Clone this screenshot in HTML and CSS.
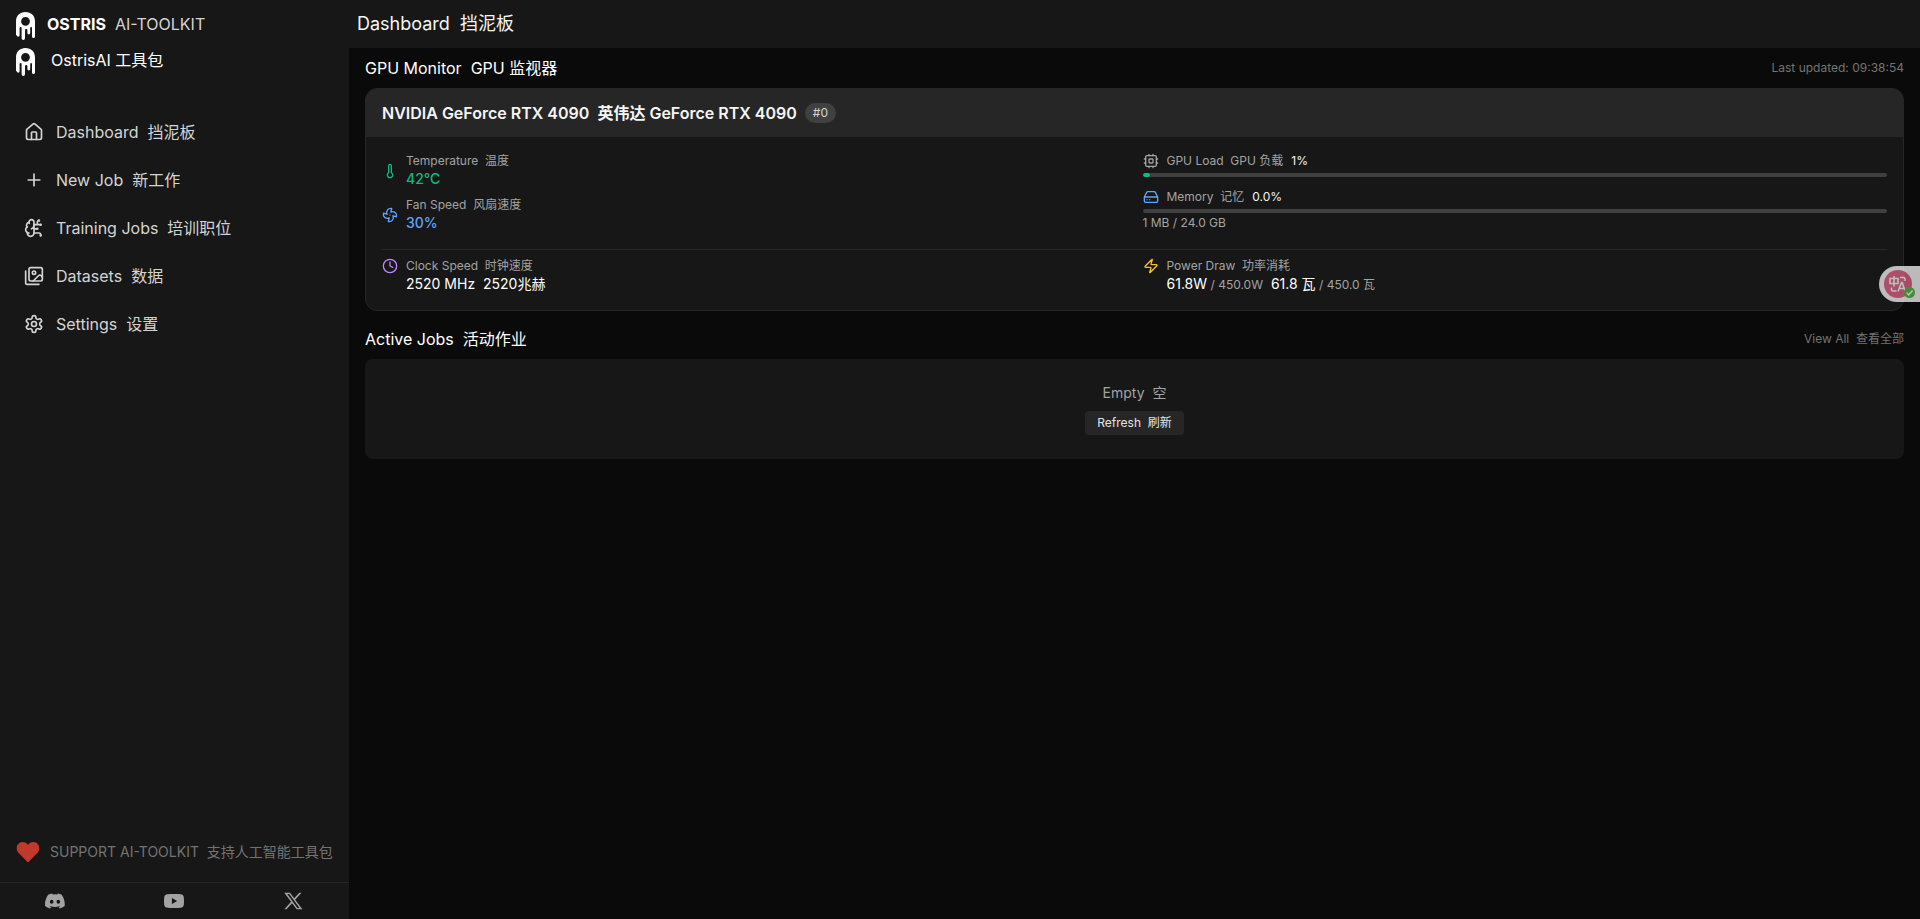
FILE: index.html
```html
<!DOCTYPE html>
<html lang="en">
<head>
<meta charset="utf-8">
<meta name="viewport" content="width=device-width, initial-scale=1">
<title>Ostris AI-Toolkit</title>
<link rel="stylesheet" href="styles.css">
</head>
<body>
<svg class="sprite" aria-hidden="true">
  <symbol id="logo" viewBox="0 0 19 28">
    <path fill="#fff" fill-rule="evenodd" d="M0 9.500C0 3.500 4 0 9.500 0S19 3.500 19 9.500V24.500a1.500 1.500 0 0 1-3 0V16a.9.9 0 0 0-1.800 0V21a1.400 1.400 0 0 1-2.800 0V18.200a1.200 1.200 0 0 0-2.400 0V26.300a1.700 1.700 0 0 1-3.400 0V16a1 1 0 0 0-2 0V23.300a1.400 1.400 0 0 1-2.800 0H0zM9.500 4.900a4.400 4.400 0 1 0 0 8.800a4.400 4.400 0 0 0 0-8.800z"/>
  </symbol>
</svg>
<div class="app">
  <aside class="sidebar">
    <div class="brand">
      <h1 class="brand-row"><svg class="logo"><use href="#logo"/></svg><span><b>OSTRIS</b>&nbsp; <span class="brand-sub">AI-TOOLKIT</span></span></h1>
      <div class="brand-row brand-row-alt"><svg class="logo"><use href="#logo"/></svg><span>OstrisAI 工具包</span></div>
    </div>
    <nav class="nav">
      <a href="#"><svg class="icon" viewBox="0 0 24 24"><path d="M15 21v-8a1 1 0 0 0-1-1h-4a1 1 0 0 0-1 1v8"/><path d="M3 10a2 2 0 0 1 .709-1.528l7-5.999a2 2 0 0 1 2.582 0l7 5.999A2 2 0 0 1 21 10v9a2 2 0 0 1-2 2H5a2 2 0 0 1-2-2z"/></svg>Dashboard&nbsp; 挡泥板</a>
      <a href="#"><svg class="icon" viewBox="0 0 24 24"><path d="M5 12h14M12 5v14"/></svg>New Job&nbsp; 新工作</a>
      <a href="#"><svg class="icon" viewBox="0 0 24 24"><path d="M12 5a3 3 0 1 0-5.997.125 4 4 0 0 0-2.526 5.770 4 4 0 0 0 .556 6.588A4 4 0 1 0 12 18Z"/><path d="M9 13a4.500 4.500 0 0 0 3-4M6.003 5.125A3 3 0 0 0 6.401 6.500M3.477 10.896a4 4 0 0 1 .585-.396M6 18a4 4 0 0 1-1.967-.516M12 13h4M12 18h6a2 2 0 0 1 2 2v1M12 8h8M16 8V5a2 2 0 0 1 2-2"/><circle cx="16" cy="13" r=".5"/><circle cx="18" cy="3" r=".5"/><circle cx="20" cy="21" r=".5"/><circle cx="20" cy="8" r=".5"/></svg>Training Jobs&nbsp; 培训职位</a>
      <a href="#"><svg class="icon" viewBox="0 0 24 24"><path d="M18 22H4a2 2 0 0 1-2-2V6"/><path d="m22 13-1.296-1.296a2.410 2.410 0 0 0-3.408 0L11 18"/><circle cx="12" cy="8" r="2"/><rect width="16" height="16" x="6" y="2" rx="2"/></svg>Datasets&nbsp; 数据</a>
      <a href="#"><svg class="icon" viewBox="0 0 24 24"><path d="M12.220 2h-.440a2 2 0 0 0-2 2v.180a2 2 0 0 1-1 1.730l-.430.250a2 2 0 0 1-2 0l-.150-.080a2 2 0 0 0-2.730.730l-.220.380a2 2 0 0 0 .730 2.730l.150.100a2 2 0 0 1 1 1.720v.510a2 2 0 0 1-1 1.740l-.150.090a2 2 0 0 0-.730 2.730l.220.380a2 2 0 0 0 2.730.730l.150-.080a2 2 0 0 1 2 0l.430.250a2 2 0 0 1 1 1.730V20a2 2 0 0 0 2 2h.440a2 2 0 0 0 2-2v-.180a2 2 0 0 1 1-1.730l.430-.250a2 2 0 0 1 2 0l.150.080a2 2 0 0 0 2.730-.730l.220-.390a2 2 0 0 0-.730-2.730l-.150-.080a2 2 0 0 1-1-1.740v-.500a2 2 0 0 1 1-1.740l.150-.090a2 2 0 0 0 .730-2.730l-.220-.380a2 2 0 0 0-2.730-.730l-.150.080a2 2 0 0 1-2 0l-.430-.250a2 2 0 0 1-1-1.730V4a2 2 0 0 0-2-2z"/><circle cx="12" cy="12" r="3"/></svg>Settings&nbsp; 设置</a>
    </nav>
    <a class="support" href="#"><svg class="heart" viewBox="0 0 24 24"><path fill="#c0392b" d="M12 22.400L2.600 12.900C-1.500 8.500 1.500 2 6.500 2 9 2 11 3.200 12 4.800 13 3.200 15 2 17.500 2 22.500 2 25.500 8.500 21.400 12.900z"/></svg><span>SUPPORT AI-TOOLKIT&nbsp; 支持人工智能工具包</span></a>
    <div class="social">
      <a href="#" aria-label="Discord"><svg viewBox="0 0 24 24"><path d="M20.317 4.370a19.800 19.800 0 0 0-4.885-1.515c-.210.375-.444.865-.608 1.250a18.300 18.300 0 0 0-5.487 0 12.600 12.600 0 0 0-.617-1.250A19.700 19.700 0 0 0 3.677 4.370C.533 9.046-.320 13.580.100 18.058a19.900 19.900 0 0 0 5.993 3.030c.462-.630.874-1.295 1.226-1.994a13 13 0 0 1-1.872-.892l.372-.292c3.928 1.793 8.180 1.793 12.062 0l.373.292a12.300 12.300 0 0 1-1.873.892c.360.698.772 1.362 1.225 1.993a19.800 19.800 0 0 0 6.002-3.030c.500-5.177-.838-9.674-3.549-13.660zM8.020 15.330c-1.183 0-2.157-1.085-2.157-2.419S6.818 10.500 8.020 10.500s2.176 1.090 2.157 2.410c0 1.335-.956 2.420-2.157 2.420zm7.975 0c-1.183 0-2.157-1.085-2.157-2.419s.955-2.411 2.157-2.411 2.176 1.090 2.157 2.410c0 1.335-.946 2.420-2.157 2.420z"/></svg></a>
      <a href="#" aria-label="YouTube"><svg viewBox="0 0 24 24"><path d="M23.500 6.200a3 3 0 0 0-2.100-2.100C19.500 3.500 12 3.500 12 3.500s-7.500 0-9.400.600A3 3 0 0 0 .500 6.200 31 31 0 0 0 0 12a31 31 0 0 0 .500 5.800 3 3 0 0 0 2.100 2.100c1.900.600 9.400.600 9.400.600s7.500 0 9.400-.600a3 3 0 0 0 2.100-2.100A31 31 0 0 0 24 12a31 31 0 0 0-.500-5.800zM9.500 15.600V8.400l6.300 3.600z"/></svg></a>
      <a href="#" aria-label="X"><svg viewBox="0 0 24 24"><path fill-rule="evenodd" d="M1.500 2h6.900l5 6.700L19.600 2h2.600l-7.600 8.400L23.300 22h-6.900l-5.500-7.300L4.200 22H1.600l8.100-9zM5.100 3.700 17.300 20.300h2.500L7.500 3.700z"/></svg></a>
    </div>
  </aside>
  <main class="main">
    <header class="topbar"><h2>Dashboard&nbsp; 挡泥板</h2></header>
    <div class="content">
      <section>
        <div class="section-head"><h3>GPU Monitor&nbsp; GPU 监视器</h3><span class="muted">Last updated: 09:38:54</span></div>
        <article class="gpu">
          <div class="gpu-head"><h4>NVIDIA GeForce RTX 4090&nbsp; 英伟达 GeForce RTX 4090</h4><span class="badge">#0</span></div>
          <div class="gpu-body">
            <div class="grid">
              <div class="stats">
                <div class="stat"><svg class="icon green" viewBox="0 0 24 24"><path d="M14 4v10.540a4 4 0 1 1-4 0V4a2 2 0 0 1 4 0Z"/></svg><div><p class="label">Temperature&nbsp; 温度</p><p class="value green">42°C</p></div></div>
                <div class="stat"><svg class="icon blue" viewBox="0 0 24 24"><path d="M10.827 16.379a6.082 6.082 0 0 1-8.618-7.002l5.412 1.450a6.082 6.082 0 0 1 7.002-8.618l-1.450 5.412a6.082 6.082 0 0 1 8.618 7.002l-5.412-1.450a6.082 6.082 0 0 1-7.002 8.618l1.450-5.412Z"/><path d="M12 12v.010"/></svg><div><p class="label">Fan Speed&nbsp; 风扇速度</p><p class="value blue">30%</p></div></div>
              </div>
              <div class="meters">
                <div class="meter-row"><svg class="icon gray" viewBox="0 0 24 24"><rect x="4" y="4" width="16" height="16" rx="2"/><rect x="9" y="9" width="6" height="6" rx="1"/><path d="M15 2v2M15 20v2M2 15h2M2 9h2M20 15h2M20 9h2M9 2v2M9 20v2"/></svg><span class="label">GPU Load&nbsp; GPU 负载</span><span class="pct">1%</span></div>
                <div class="bar"><div class="fill" style="width:1%"></div></div>
                <div class="meter-row meter-next"><svg class="icon blue" viewBox="0 0 24 24"><path d="M22 12H2M5.450 5.110 2 12v6a2 2 0 0 0 2 2h16a2 2 0 0 0 2-2v-6l-3.450-6.890A2 2 0 0 0 16.760 4H7.240a2 2 0 0 0-1.790 1.110zM6 16h.010M10 16h.010"/></svg><span class="label">Memory&nbsp; 记忆</span><span class="pct">0.0%</span></div>
                <div class="bar"><div class="fill" style="width:0%"></div></div>
                <p class="label mem">1 MB / 24.0 GB</p>
              </div>
            </div>
            <div class="grid grid-foot">
              <div class="stat top"><svg class="icon purple" viewBox="0 0 24 24"><circle cx="12" cy="12" r="10"/><path d="M12 6v6l4 2"/></svg><div><p class="label">Clock Speed&nbsp; 时钟速度</p><p class="value plain">2520 MHz&nbsp; 2520兆赫</p></div></div>
              <div class="stat top"><svg class="icon yellow" viewBox="0 0 24 24"><path d="M4 14a1 1 0 0 1-.780-1.630l9.900-10.200a.5.5 0 0 1 .860.460l-1.920 6.020A1 1 0 0 0 13 10h7a1 1 0 0 1 .780 1.630l-9.900 10.200a.5.5 0 0 1-.860-.460l1.920-6.020A1 1 0 0 0 11 14z"/></svg><div><p class="label">Power Draw&nbsp; 功率消耗</p><p class="value plain">61.8W<span class="limit"> / 450.0W</span>&nbsp; 61.8 瓦<span class="limit"> / 450.0 瓦</span></p></div></div>
            </div>
          </div>
        </article>
      </section>
      <section>
        <div class="section-head"><h3>Active Jobs&nbsp; 活动作业</h3><a class="muted" href="#">View All&nbsp; 查看全部</a></div>
        <div class="empty"><p>Empty&nbsp; 空</p><button type="button">Refresh&nbsp; 刷新</button></div>
      </section>
    </div>
  </main>
</div>
<button class="translate" type="button" aria-label="Translate">
  <svg viewBox="0 0 32 30"><circle cx="14" cy="14" r="14" fill="#e8668a"/><g fill="none" stroke="#fff" stroke-width="1.600"><path d="M6 8.500h8v5H6zM10 6v10.500M16 7.500h3.500q1.500 0 1.500 1.500v2M7.500 17.500v2q0 1.500 1.500 1.500h3.500M14 21.500l3.500-9h.500l3.500 9M15.300 18.500h5"/></g><circle cx="25.500" cy="22.500" r="5.500" fill="#5cc04a"/><path d="m22.600 22.700 2.100 2.100 3.900-4.200" fill="none" stroke="#fff" stroke-width="1.500"/></svg>
</button>
</body>
</html>
```
FILE: styles.css
```css
* { box-sizing: border-box; }
body, h1, h2, h3, h4, p { margin: 0; font-size: inherit; font-weight: inherit; }
body {
  background: #0a0a0a;
  color: #f5f5f5;
  font: 400 16px/24px Inter, "Noto Sans CJK SC", sans-serif;
}
a { color: inherit; text-decoration: none; }
button { border: 0; font: inherit; color: inherit; cursor: pointer; }
svg { display: block; flex: none; }
.sprite { position: absolute; width: 0; height: 0; }

.app { display: flex; min-height: 100vh; }

.sidebar {
  flex: none;
  display: flex;
  flex-direction: column;
  width: 349px;
  background: #171717;
}
.brand {
  display: flex;
  flex-direction: column;
  gap: 8px;
  padding: 12px 16px 24px;
}
.brand-row { display: flex; align-items: flex-start; gap: 12px; }
.brand-row-alt { gap: 16px; color: #fff; }
.brand-row b { font-weight: 700; color: #fff; }
.brand-sub { color: #d4d4d4; }
.logo { width: 19px; height: 28px; }

.nav { flex: 1; padding: 8px; color: #d4d4d4; }
.nav a { display: flex; align-items: center; gap: 12px; padding: 12px 16px; }
.icon {
  width: 16px;
  height: 16px;
  fill: none;
  stroke: currentColor;
  stroke-width: 2;
  stroke-linecap: round;
  stroke-linejoin: round;
}
.nav .icon { width: 20px; height: 20px; }

.support {
  display: flex;
  align-items: center;
  gap: 10px;
  padding: 18px 16px;
  color: #737373;
  font-size: 14px;
}
.heart { width: 24px; height: 24px; }
.social {
  display: grid;
  grid-template-columns: repeat(3, 1fr);
  column-gap: 10px;
  padding: 8px 2px 8px 0;
  border-top: 1px solid #262626;
}
.social a { display: flex; justify-content: center; }
.social svg { width: 20px; height: 20px; fill: #a3a3a3; }

.main { flex: 1; min-width: 0; }
.topbar { padding: 10px 8px; background: #171717; font-size: 18px; line-height: 28px; }
.content { display: flex; flex-direction: column; gap: 16px; padding: 8px 16px; }
.section-head {
  display: flex;
  align-items: center;
  justify-content: space-between;
  margin-bottom: 8px;
}
.section-head h3 { color: #fff; }
.muted { color: #737373; font-size: 12px; line-height: 16px; }

.gpu {
  overflow: hidden;
  background: #171717;
  border: 1px solid #262626;
  border-radius: 12px;
}
.gpu-head { display: flex; align-items: center; gap: 8px; padding: 12px 16px; background: #262626; }
.gpu-head h4 { font-weight: 600; }
.badge {
  padding: 2px 8px;
  border-radius: 10px;
  background: #404040;
  color: #d4d4d4;
  font-size: 12px;
  line-height: 16px;
}
.gpu-body { padding: 16px 16px 15px; }
.grid { display: grid; grid-template-columns: 1fr 1fr; gap: 16px; }
.grid-foot { margin-top: 16px; padding-top: 8px; border-top: 1px solid #262626; }
.stats { display: flex; flex-direction: column; gap: 8px; }
.stat { display: flex; align-items: center; gap: 8px; }
.stat.top { align-items: flex-start; }
.label { color: #a3a3a3; font-size: 12px; line-height: 16px; }
.value { font-size: 14px; line-height: 20px; font-weight: 500; }
.value.plain { color: #fff; font-weight: 400; }
.value .limit { color: #a3a3a3; font-size: 12px; }
.meter-row { display: flex; align-items: center; gap: 8px; margin-bottom: 4px; }
.meter-next { margin-top: 12px; }
.pct { font-size: 12px; line-height: 16px; }
.bar { overflow: hidden; height: 4px; border-radius: 2px; background: #404040; }
.fill { height: 4px; border-radius: 2px; background: #10b981; }
.mem { margin-top: 2px; }
.green { color: #10b981; }
.blue { color: #60a5fa; }
.gray { color: #a3a3a3; }
.purple { color: #c084fc; }
.yellow { color: #fbbf24; }

.empty {
  display: flex;
  flex-direction: column;
  align-items: center;
  gap: 8px;
  padding: 24px;
  border-radius: 8px;
  background: #171717;
  color: #a3a3a3;
  font-size: 14px;
  line-height: 20px;
}
.empty button {
  padding: 4px 12px;
  border-radius: 4px;
  background: #262626;
  color: #e5e5e5;
  font-size: 12px;
  line-height: 16px;
}

.translate {
  position: fixed;
  top: 266px;
  right: 0;
  padding: 4px 4px 2px 5px;
  border-radius: 18px 0 0 18px;
  background: #fff;
  opacity: 0.72;
}
.translate svg { width: 32px; height: 30px; }
```
